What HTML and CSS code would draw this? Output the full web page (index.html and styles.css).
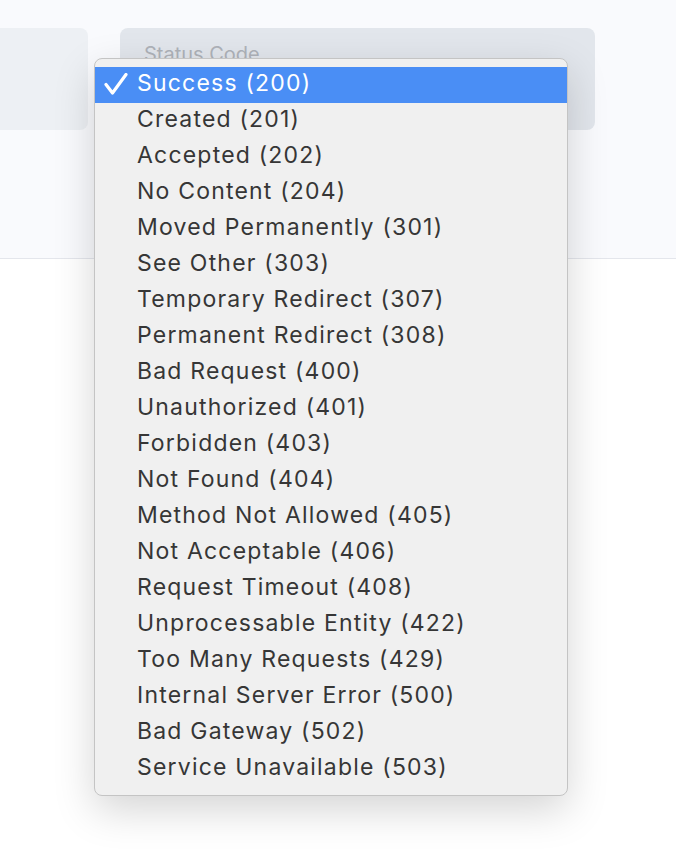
FILE: index.html
```html
<!DOCTYPE html>
<html lang="en">
<head>
  <meta charset="UTF-8" />
  <meta name="viewport" content="width=device-width, initial-scale=1.0"/>
  <title>Status Code</title>
  <link rel="stylesheet" href="styles.css">
</head>
<body>
  <div class="page">
    <div class="header">
      <div class="cards">
        <div class="card card-side"></div>
        <div class="card card-status">
          <span class="card-label">Status Code</span>

          <!-- open select menu -->
          <ul class="menu">
            <li class="menu-item selected">
              <svg class="check" width="24" height="22" viewBox="0 0 24 22">
                <path d="M2 11.5 L8.5 20 L22 1.5" fill="none" stroke="#fff" stroke-width="3.2" stroke-linecap="round" stroke-linejoin="round"/>
              </svg>Success (200)</li>
            <li class="menu-item">Created (201)</li>
            <li class="menu-item">Accepted (202)</li>
            <li class="menu-item">No Content (204)</li>
            <li class="menu-item">Moved Permanently (301)</li>
            <li class="menu-item">See Other (303)</li>
            <li class="menu-item">Temporary Redirect (307)</li>
            <li class="menu-item">Permanent Redirect (308)</li>
            <li class="menu-item">Bad Request (400)</li>
            <li class="menu-item">Unauthorized (401)</li>
            <li class="menu-item">Forbidden (403)</li>
            <li class="menu-item">Not Found (404)</li>
            <li class="menu-item">Method Not Allowed (405)</li>
            <li class="menu-item">Not Acceptable (406)</li>
            <li class="menu-item">Request Timeout (408)</li>
            <li class="menu-item">Unprocessable Entity (422)</li>
            <li class="menu-item">Too Many Requests (429)</li>
            <li class="menu-item">Internal Server Error (500)</li>
            <li class="menu-item">Bad Gateway (502)</li>
            <li class="menu-item">Service Unavailable (503)</li>
          </ul>
        </div>
      </div>
    </div>
  </div>
</body>
</html>
```

FILE: styles.css
```css
html,
body {
  margin: 0;
  background: #ffffff;
  font-family: Inter, "Liberation Sans", sans-serif;
}

.page {
  min-height: 862px;
  position: relative;
}

.header {
  height: 259px;
  background: #f9fafd;
  border-bottom: 1px solid #e4e6ec;
  box-sizing: border-box;
  padding-top: 28px;
}

.cards {
  display: flex;
  gap: 32px;
}

.card {
  height: 102px;
  border-radius: 0 8px 8px 0;
  background: #edf0f4;
}

.card-side {
  width: 88px;
}

.card-status {
  position: relative;
  width: 475px;
  border-radius: 8px;
  background: #e2e6ec;
  padding: 14px 24px;
  box-sizing: border-box;
}

.card-label {
  font-size: 20px;
  color: #aeb2b9;
}

.menu {
  position: absolute;
  z-index: 10;
  left: -26px;
  top: 30px;
  width: 474px;
  margin: 0;
  padding: 8px 0;
  list-style: none;
  background: #f0f0f0;
  border: 1px solid #c4c4c4;
  border-radius: 8px;
  box-sizing: border-box;
  box-shadow: 0 14px 40px rgba(0, 0, 0, 0.17);
}

.menu-item {
  position: relative;
  height: 36px;
  line-height: 32px;
  padding: 0 0 4px 42px;
  box-sizing: border-box;
  font-size: 23px;
  letter-spacing: 1.2px;
  color: #363636;
}

.menu-item.selected {
  background: #4a8ef5;
  color: #ffffff;
}

.check {
  position: absolute;
  left: 9px;
  top: 6px;
}
```
